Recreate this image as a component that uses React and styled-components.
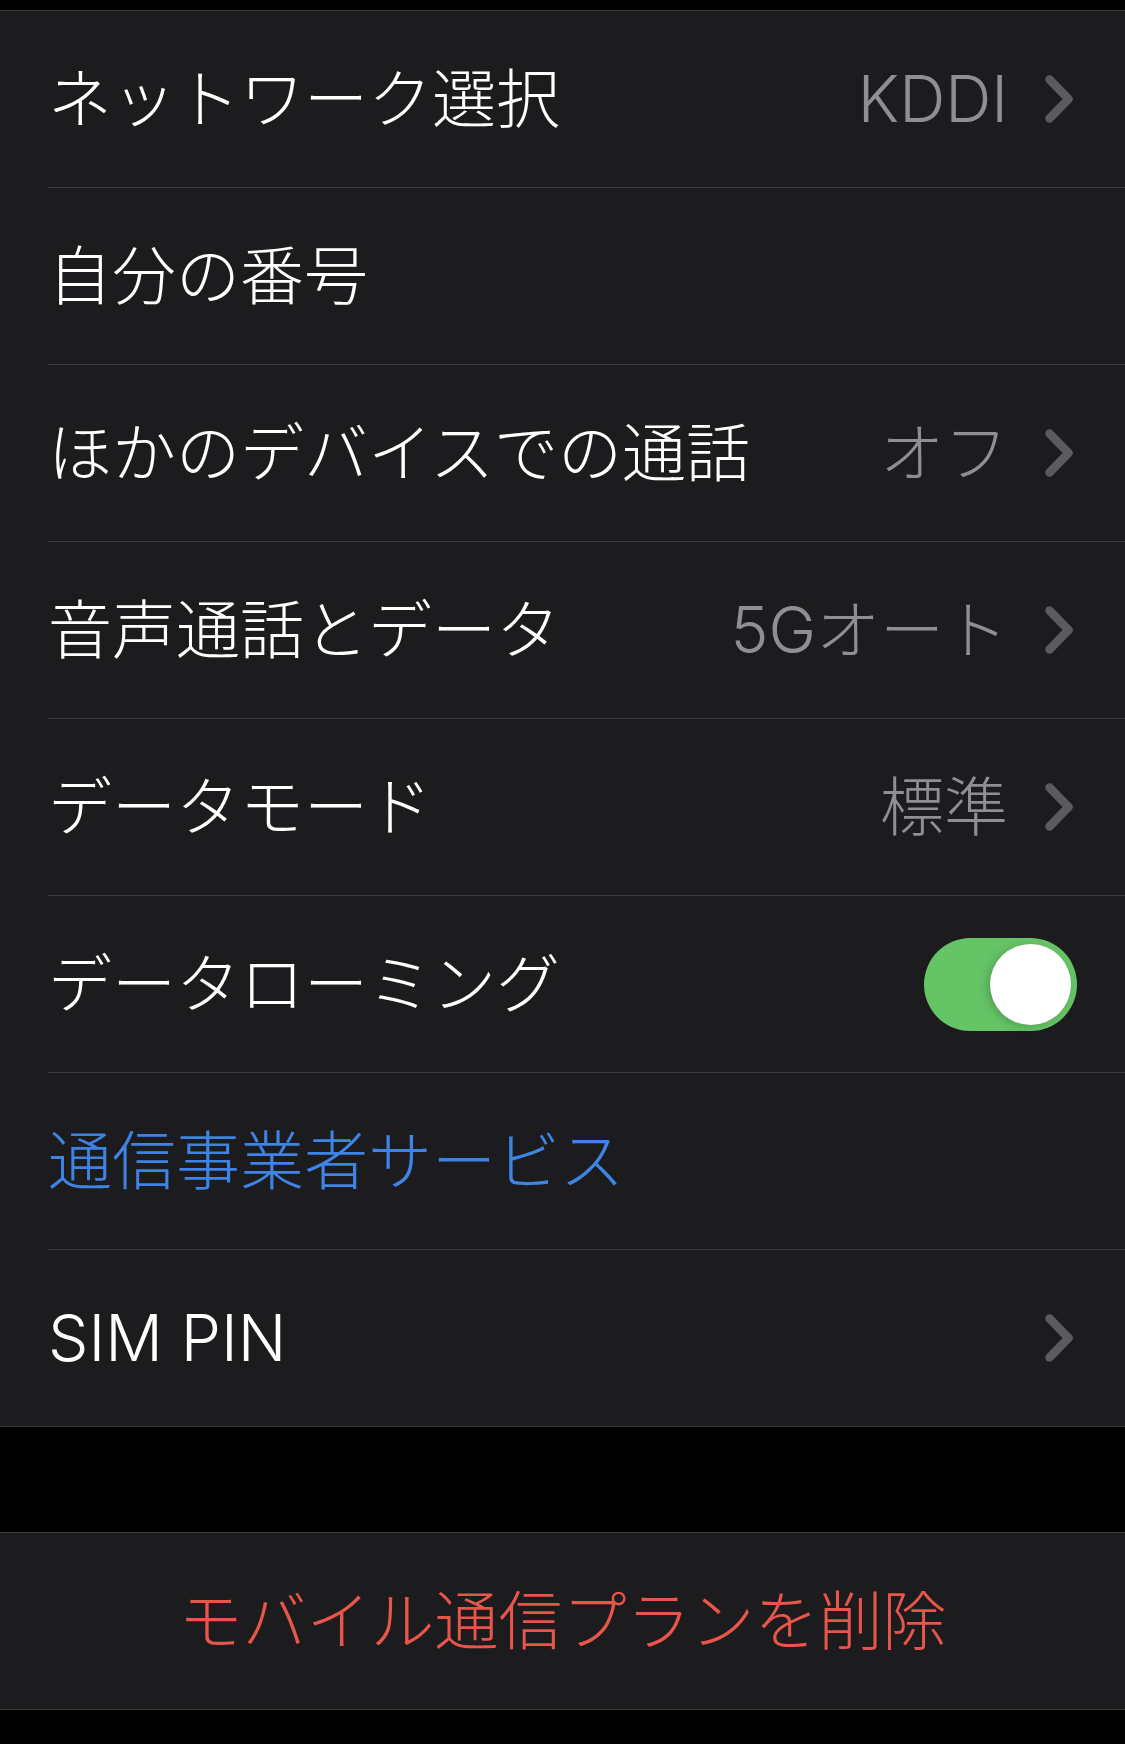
import React from 'react';
import styled, { createGlobalStyle } from 'styled-components';

const GlobalStyle = createGlobalStyle`
  html, body {
    margin: 0;
    padding: 0;
    background: #000;
  }
  body {
    font-family: "Inter", "Noto Sans CJK JP", "Noto Sans", sans-serif;
    -webkit-font-smoothing: antialiased;
  }
`;

const Screen = styled.div`
  width: 1125px;
  min-height: 1744px;
  background: #000;
  padding-top: 10px;
  box-sizing: border-box;
`;

const Group = styled.div`
  background: #1c1c1e;
  border-top: 1px solid #3a3a3c;
  border-bottom: 1px solid #3a3a3c;
  margin-bottom: ${p => p.$gap || 0}px;
`;

const Row = styled.div`
  padding-left: 48px;
  &:last-child > div {
    border-bottom: none;
  }
`;

const RowInner = styled.div`
  height: 176px;
  display: flex;
  align-items: center;
  justify-content: ${p => (p.$center ? 'center' : 'space-between')};
  padding-right: 48px;
  border-bottom: 1px solid #3a3a3c;
  box-sizing: content-box;
  margin-left: ${p => (p.$center ? '-48px' : '0')};
  padding-left: ${p => (p.$center ? '48px' : '0')};
`;

const Label = styled.span`
  font-size: 64px;
  font-weight: 300;
  line-height: 1;
  color: ${p => p.$color || '#ffffff'};
  white-space: nowrap;
`;

const Accessory = styled.div`
  display: flex;
  align-items: center;
  gap: 37px;
  margin-right: 4px;
`;

const Value = styled.span`
  font-size: 64px;
  font-weight: 300;
  line-height: 1;
  color: #8e8e93;
  white-space: nowrap;
`;

const Switch = styled.div`
  width: 153px;
  height: 93px;
  border-radius: 47px;
  background: #65c466;
  display: flex;
  align-items: center;
  justify-content: flex-end;
  padding: 0 6px;
  box-sizing: border-box;
`;

const Knob = styled.div`
  width: 81px;
  height: 81px;
  border-radius: 50%;
  background: #fff;
  box-shadow: -3px 2px 8px rgba(0, 0, 0, 0.18);
`;

const Chevron = () => (
  <svg width="28" height="48" viewBox="0 0 28 48">
    <path
      d="M4.5 4.5 L23.5 24 L4.5 43.5"
      fill="none"
      stroke="#5a5a5f"
      strokeWidth="8.5"
      strokeLinecap="round"
      strokeLinejoin="round"
    />
  </svg>
);

const rows = [
  { label: 'ネットワーク選択', value: 'KDDI', chevron: true },
  { label: '自分の番号' },
  { label: 'ほかのデバイスでの通話', value: 'オフ', chevron: true },
  { label: '音声通話とデータ', value: '5Gオート', chevron: true },
  { label: 'データモード', value: '標準', chevron: true },
  { label: 'データローミング', toggle: true },
  { label: '通信事業者サービス', color: '#3f84e5' },
  { label: 'SIM PIN', chevron: true },
];

export default function App() {
  return (
    <>
      <GlobalStyle />
      <Screen>
        <Group $gap={105}>
          {rows.map(r => (
            <Row key={r.label}>
              <RowInner>
                <Label $color={r.color}>{r.label}</Label>
                {(r.value || r.chevron) && (
                  <Accessory>
                    {r.value && <Value>{r.value}</Value>}
                    {r.chevron && <Chevron />}
                  </Accessory>
                )}
                {r.toggle && (
                  <Switch>
                    <Knob />
                  </Switch>
                )}
              </RowInner>
            </Row>
          ))}
        </Group>
        <Group>
          <Row>
            <RowInner $center>
              <Label $color="#e8554a">モバイル通信プランを削除</Label>
            </RowInner>
          </Row>
        </Group>
      </Screen>
    </>
  );
}
